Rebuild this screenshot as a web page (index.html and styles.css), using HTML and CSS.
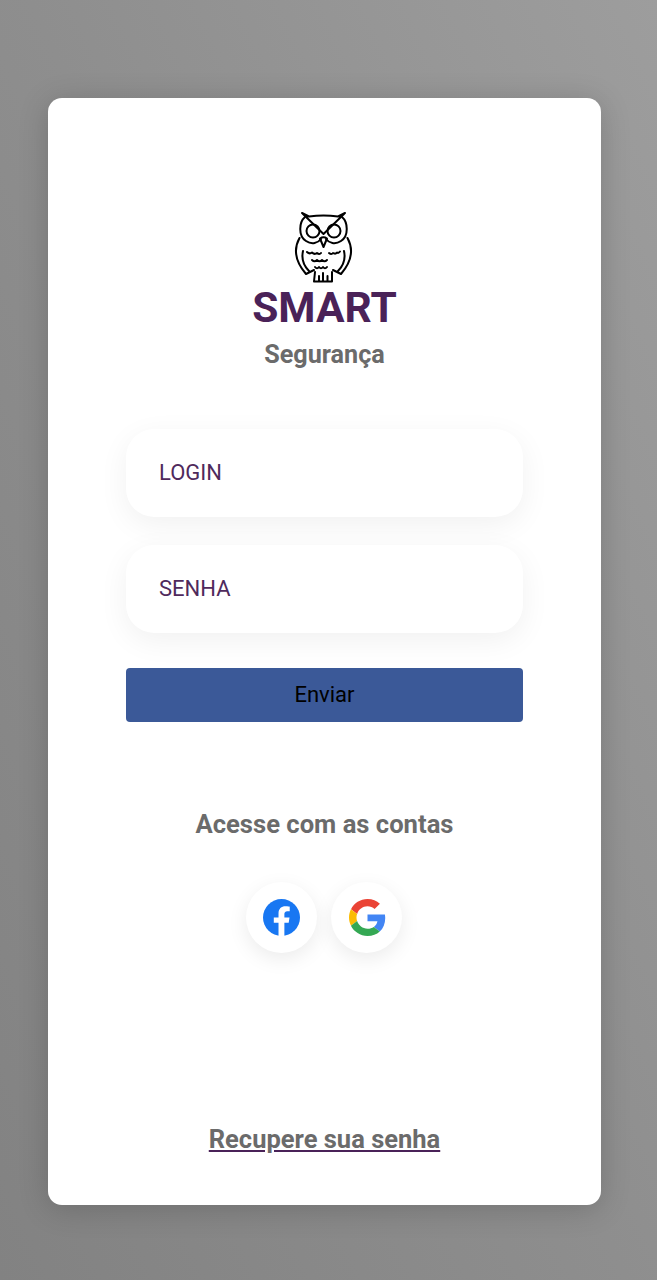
FILE: index.html
```html
<!DOCTYPE html>
<html lang="pt-BR">
<head>
    <meta charset="UTF-8">
    <meta name="viewport" content="width=device-width, initial-scale=1.0">
    <title>Smart Segurança</title>
    <link rel="stylesheet" href="styles.css">
</head>
<body>
    <main class="card">
        <div class="brand">
            <svg class="owl" viewBox="0 0 60 74" fill="none" stroke="#000" stroke-width="2" stroke-linejoin="round" stroke-linecap="round">
                <!-- head -->
                <path d="M8 3 L29.500 24 L51 3 L44 6.500 Q29.500 4.500 15 6.500 Z"/>
                <path d="M11 7 C5 12 4 26 12 31 C18 35 24 33 27 29"/>
                <path d="M48 7 C54 12 55 26 47 31 C41 35 35 33 32 29"/>
                <circle cx="19" cy="21" r="6.500"/>
                <circle cx="40" cy="21" r="6.500"/>
                <path d="M26 28.500 Q29.500 26 33 28.500 L29.500 37 Z"/>
                <!-- wings -->
                <path d="M5.500 28 C0 38 0 50 12 64 L20 60"/>
                <path d="M53.500 28 C59 38 59 50 47 64 L39 60"/>
                <path d="M9 41 C7 50 10 56 15 61"/>
                <path d="M50 41 C52 50 49 56 44 61"/>
                <!-- chest feathers -->
                <path d="M13 42 q2.500 2.500 5 .5 q2.500 2.500 5 .5 q2.500 2 4 0"/>
                <path d="M35 43 q2.500 2 4 0 q2.500 1.500 4 -.5 q1.500 1 3 -1"/>
                <path d="M18 50 q2.500 2.500 5 0 q2.500 2.500 5 0 q2.500 2.500 5 0"/>
                <path d="M21 57 q2 2.500 4 0 q2 2.500 4 0 q2 2.500 4 0"/>
                <!-- feet -->
                <path d="M21 62 L20 71.500 H29 V63 M29 71.500 H38 L38 62 M25 71 V66 M33.500 71 V66"/>
            </svg>
            <h1 class="brand-title">SMART</h1>
            <p class="brand-sub">Segurança</p>
        </div>

        <form class="login-form">
            <input class="field" type="text" placeholder="LOGIN">
            <input class="field" type="password" placeholder="SENHA">
            <button class="btn-send" type="button">Enviar</button>
        </form>

        <p class="social-label">Acesse com as contas</p>
        <div class="social">
            <a class="social-btn" href="#">
                <svg viewBox="0 0 36 36" width="37" height="37">
                    <circle cx="18" cy="18" r="18" fill="#1877f2"/>
                    <path fill="#fff" d="M25 23.200 L25.800 18 H20.800 V14.700 C20.800 13.300 21.500 11.900 23.700 11.900 H26 V7.500 C26 7.500 23.900 7.100 21.900 7.100 C17.800 7.100 15.100 9.600 15.100 14.100 V18 H10.500 V23.200 H15.100 V36 C16 36.100 17 36.200 18 36.200 C19 36.200 19.900 36.100 20.800 36 V23.200 Z"/>
                </svg>
            </a>
            <a class="social-btn" href="#">
                <svg class="google" viewBox="0 0 48 48" width="37" height="37">
                    <path fill="#ea4335" d="M24 9.500c3.500 0 6.700 1.200 9.200 3.600l6.900-6.900C35.900 2.400 30.500 0 24 0 14.600 0 6.500 5.400 2.600 13.200l8 6.200C12.400 13.700 17.700 9.500 24 9.500z"/>
                    <path fill="#4285f4" d="M47 24.500c0-1.600-.2-3.100-.4-4.500H24v9h12.900c-.6 3-2.200 5.500-4.700 7.200l7.700 6C44.400 38 47 31.800 47 24.500z"/>
                    <path fill="#fbbc05" d="M10.500 28.600c-.5-1.400-.8-3-.8-4.600s.3-3.200.8-4.600l-8-6.200C.9 16.500 0 20.100 0 24s.9 7.500 2.600 10.800l7.900-6.200z"/>
                    <path fill="#34a853" d="M24 48c6.500 0 11.900-2.100 15.900-5.800l-7.700-6c-2.200 1.400-4.900 2.300-8.200 2.300-6.300 0-11.600-4.200-13.500-9.900l-8 6.200C6.500 42.600 14.600 48 24 48z"/>
                </svg>
            </a>
        </div>

        <a class="recover" href="#">Recupere sua senha</a>
    </main>
</body>
</html>
```

FILE: styles.css
```css
* {
    box-sizing: border-box;
}

body {
    margin: 0;
    height: 1280px;
    padding: 98px 56px 75px 48px;
    font-family: Roboto, "Liberation Sans", sans-serif;
    background: linear-gradient(65deg, #828282 0%, #8e8e8e 50%, #9d9d9d 100%);
    overflow: hidden;
}

.card {
    height: 1107px;
    padding: 112px 78px 0;
    display: flex;
    flex-direction: column;
    align-items: center;
    background: #fff;
    border-radius: 14px;
    box-shadow: 0 4px 30px rgba(0, 0, 0, 0.18);
}

.brand {
    display: flex;
    flex-direction: column;
    align-items: center;
}

.owl {
    display: block;
    width: 60px;
    height: 74px;
}

.brand-title {
    margin: 0;
    font-size: 42.500px;
    line-height: 47px;
    font-weight: 700;
    color: #4a2258;
}

.brand-sub {
    margin: 9px 0 0;
    font-size: 25.200px;
    line-height: 29px;
    font-weight: 700;
    color: #6b6b6b;
}

.login-form {
    width: 397px;
    margin-top: 60px;
    display: flex;
    flex-direction: column;
}

.field {
    width: 100%;
    height: 88px;
    margin-bottom: 28px;
    padding: 0 33px 2px;
    border: none;
    border-radius: 28px;
    background: #fff;
    font-family: inherit;
    font-size: 22px;
    color: #4f2a5c;
    box-shadow: 0 8px 30px rgba(0, 0, 0, 0.06);
    outline: none;
}

.field::placeholder {
    color: #4f2a5c;
    opacity: 1;
}

.btn-send {
    height: 54px;
    margin-top: 7px;
    padding: 0 0 2px;
    border: none;
    border-radius: 4px;
    background: #3b5998;
    font-family: inherit;
    font-size: 22px;
    color: #000;
}

.social-label {
    margin: 88px 0 0;
    font-size: 25.600px;
    line-height: 29px;
    font-weight: 700;
    color: #6b6b6b;
}

.social {
    margin-top: 43px;
    display: flex;
    gap: 14px;
    transform: translateX(-1px);
}

.social-btn {
    width: 71px;
    height: 71px;
    display: flex;
    align-items: center;
    justify-content: center;
    border-radius: 50%;
    background: #fff;
    box-shadow: 0 6px 20px rgba(0, 0, 0, 0.08);
}

.google {
    margin-left: 2px;
}

.recover {
    margin-top: 172px;
    font-size: 25.500px;
    line-height: 29px;
    font-weight: 700;
    color: #6b6b6b;
    text-decoration: underline;
    text-decoration-color: #4a2258;
}
```
